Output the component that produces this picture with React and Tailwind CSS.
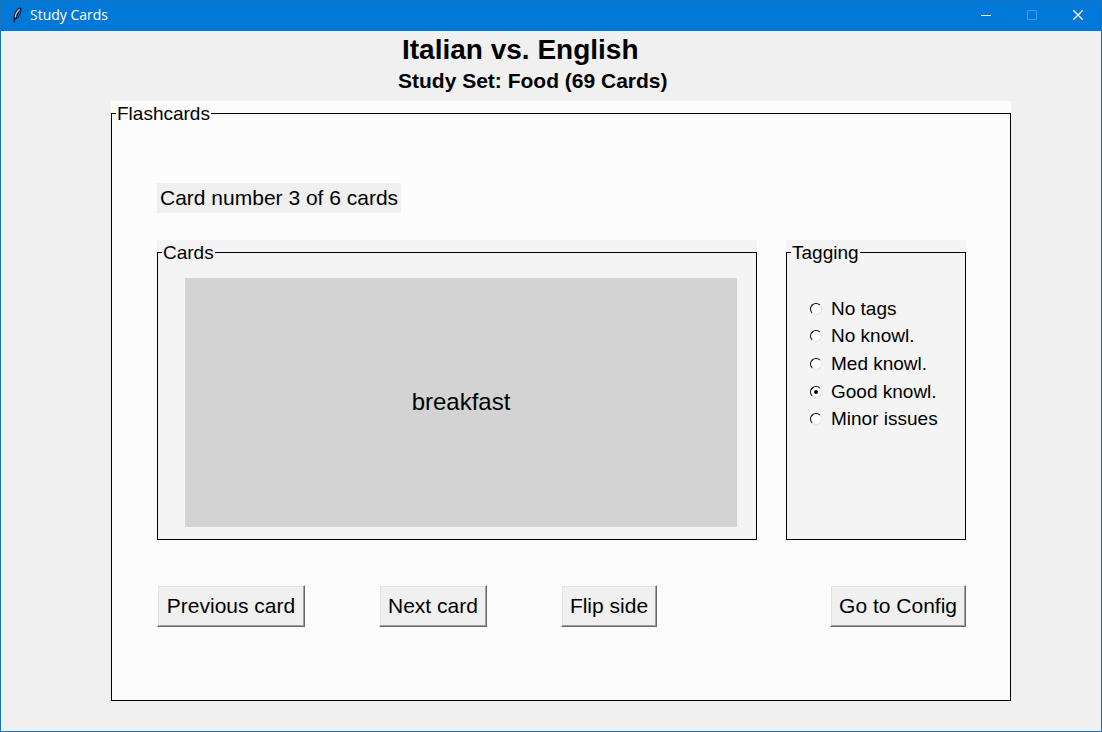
import React, { useState } from "react";

const TAGS = ["No tags", "No knowl.", "Med knowl.", "Good knowl.", "Minor issues"];

function FeatherIcon() {
  return (
    <svg className="h-4 w-4" viewBox="0 0 16 16" aria-hidden="true">
      <path d="M4.4 15.4 L4.8 12.6 C3.8 10 4.9 6.2 7.2 3.4 C8.8 1.4 10.9 -0.1 12 0.4 C13 2.2 12.2 6 10.6 8.6 C9.4 10.7 7.8 12.2 6.2 12.7 L5.4 15.4 Z" fill="#0b1a2c" />
      <path d="M6.2 10.6 C6.2 7.8 7.8 4.8 10.6 2.2" fill="none" stroke="#b4d4ee" strokeWidth="1.3" />
      <path d="M8 10 C9.6 8.4 10.6 6.2 11 3.8" fill="none" stroke="#6f9cc4" strokeWidth="0.7" />
    </svg>
  );
}

function WindowButton({ label, disabled, children }) {
  return (
    <button
      type="button"
      aria-label={label}
      disabled={disabled}
      className="flex h-full w-[46px] items-center justify-center text-white disabled:text-[#3f9be6]"
    >
      <svg className="h-[10px] w-[10px]" viewBox="0 0 10 10" fill="none" stroke="currentColor" aria-hidden="true">
        {children}
      </svg>
    </button>
  );
}

function TitleBar() {
  return (
    <div className="flex h-[30px] items-center bg-[#0078d7] pb-0.5 pl-2">
      <FeatherIcon />
      <span className="ml-[5px] flex-1 font-['Open_Sans','Noto_Sans',sans-serif] text-[14px] leading-5 text-white">
        Study Cards
      </span>
      <WindowButton label="Minimize">
        <path d="M0 5.5H10" />
      </WindowButton>
      <WindowButton label="Maximize" disabled>
        <path d="M0.5 0.5H9.5V9.5H0.5Z" />
      </WindowButton>
      <WindowButton label="Close">
        <path d="M0.3 0.3L9.7 9.7M9.7 0.3L0.3 9.7" strokeWidth="1.3" />
      </WindowButton>
    </div>
  );
}

function LabelFrame({ title, className, bodyClassName, children }) {
  return (
    <div className={`flex flex-col ${className}`}>
      <fieldset className="min-w-0 flex-1 border border-black pl-1">
        <legend className="h-[25px] px-px text-[19px] leading-[25px]">{title}</legend>
        <div className={bodyClassName}>{children}</div>
      </fieldset>
    </div>
  );
}

function RaisedButton({ className = "", children }) {
  return (
    <button
      type="button"
      className={`h-[42px] border border-t-white border-r-[#696969] border-b-[#696969] border-l-white bg-[#f0f0f0] px-2 text-[21px] leading-6 whitespace-nowrap shadow-[inset_-1px_-1px_0_#a0a0a0,inset_1px_1px_0_#e3e3e3] active:border-t-[#696969] active:border-l-[#696969] ${className}`}
    >
      {children}
    </button>
  );
}

export default function App() {
  const [tag, setTag] = useState("Good knowl.");

  return (
    <div className="flex min-h-screen flex-col border border-[#1874bd] bg-[#f0f0f0] font-['Liberation_Sans',Arial,sans-serif] text-black">
      <TitleBar />
      <main className="flex flex-1 flex-col pr-[90px] pb-[30px] pl-[110px]">
        <header className="flex h-[70px] flex-col items-start pt-[3px] pl-[287px]">
          <h1 className="pl-1 text-[28px] leading-8 font-bold">Italian vs. English</h1>
          <h2 className="text-[21px] leading-[30px] font-bold">Study Set: Food (69 Cards)</h2>
        </header>

        <LabelFrame
          title="Flashcards"
          className="flex-1 bg-[#fcfcfc]"
          bodyClassName="flex flex-col items-stretch pt-[57px] pr-11 pb-[73px] pl-[41px]"
        >
          <p className="self-start bg-[#f0f0f0] px-[3px] text-[21px] leading-[30px]">
            Card number 3 of 6 cards
          </p>

          <div className="mt-[27px] flex h-[300px] gap-[29px]">
            <LabelFrame
              title="Cards"
              className="flex-1 bg-[#f4f4f4]"
              bodyClassName="flex h-full pt-[13px] pr-[19px] pb-3 pl-[23px]"
            >
              <div className="flex flex-1 items-center justify-center bg-[#d3d3d3] pb-0.5 text-2xl">
                breakfast
              </div>
            </LabelFrame>

            <LabelFrame
              title="Tagging"
              className="w-[180px] bg-[#f4f4f4]"
              bodyClassName="grid h-[168px] grid-rows-5 pt-[30px] pl-[19px]"
            >
              {TAGS.map((name) => (
                <label key={name} className="flex items-center gap-[9px] text-[19px] leading-6 whitespace-nowrap">
                  <input
                    type="radio"
                    name="tag"
                    value={name}
                    checked={tag === name}
                    onChange={() => setTag(name)}
                    className="flex h-3 w-3 shrink-0 appearance-none items-center justify-center rounded-full border border-t-black border-r-[#e3e3e3] border-b-[#e3e3e3] border-l-black bg-white before:h-1 before:w-1 before:rounded-full checked:before:bg-black"
                  />
                  {name}
                </label>
              ))}
            </LabelFrame>
          </div>

          <div className="mt-[45px] flex gap-[74px]">
            <RaisedButton className="w-[148px]">Previous card</RaisedButton>
            <RaisedButton>Next card</RaisedButton>
            <RaisedButton>Flip side</RaisedButton>
            <RaisedButton className="ml-auto">Go to Config</RaisedButton>
          </div>
        </LabelFrame>
      </main>
    </div>
  );
}
